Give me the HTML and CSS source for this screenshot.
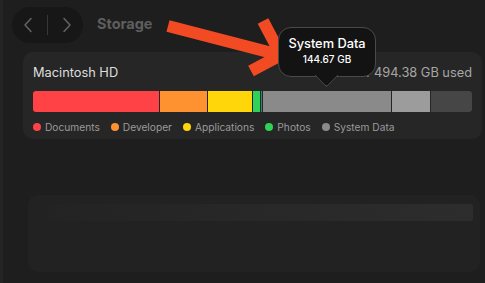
FILE: index.html
```html
<!DOCTYPE html>
<html>
<head>
  <title>Storage</title>
  <link rel="stylesheet" href="styles.css">
</head>
<body>

  <div class="window">
    <div class="toolbar">
      <div class="nav">
        <svg class="chev" width="12" height="16" viewBox="0 0 12 16"><path d="M9 1.5 L3 8 L9 14.5" fill="none" stroke="#636363" stroke-width="1.5" stroke-linecap="round" stroke-linejoin="round"/></svg>
        <div class="nav-sep"></div>
        <svg class="chev" width="12" height="16" viewBox="0 0 12 16"><path d="M3 1.5 L9 8 L3 14.5" fill="none" stroke="#636363" stroke-width="1.5" stroke-linecap="round" stroke-linejoin="round"/></svg>
      </div>
      <div class="title">Storage</div>
    </div>

    <div class="card">
      <div class="card-head">
        <span class="disk">Macintosh HD</span>
        <span class="used">350.1 GB of 494.38 GB used</span>
      </div>
      <div class="bar">
        <div class="seg red" style="width:126px"></div>
        <div class="seg orange" style="width:47px"></div>
        <div class="seg yellow" style="width:44px"></div>
        <div class="seg green" style="width:7px"></div>
        <div class="seg teal" style="width:1px"></div>
        <div class="seg gray" style="width:128px"></div>
        <div class="seg light" style="width:38px"></div>
        <div class="seg dark"></div>
      </div>
      <div class="legend">
        <span class="item"><i class="dot red"></i>Documents</span>
        <span class="item"><i class="dot orange"></i>Developer</span>
        <span class="item"><i class="dot yellow"></i>Applications</span>
        <span class="item"><i class="dot green"></i>Photos</span>
        <span class="item"><i class="dot gray"></i>System Data</span>
      </div>
    </div>

    <div class="card faint">
      <div class="faint-row"></div>
    </div>
  </div>

  <svg class="arrow" width="485" height="100" viewBox="0 0 485 100">
    <path d="M168 26 L280 55 M263 21 L281 55 L251 71" fill="none" stroke="#f24b24" stroke-width="12" stroke-linejoin="miter"/>
  </svg>

  <div class="tooltip">
    <div class="tip-name">System Data</div>
    <div class="tip-size">144.67 GB</div>
  </div>

</body>
</html>
```

FILE: styles.css
```css
body {
  margin: 0;
  width: 485px;
  height: 283px;
  overflow: hidden;
  background: #1e1e1e;
  font-family: Inter, "Liberation Sans", sans-serif;
  position: relative;
}

.window {
  border-left: 3px solid #242424;
  height: 283px;
  box-sizing: border-box;
}

.toolbar {
  display: flex;
  align-items: center;
  padding: 7px 0 0 9px;
}

.nav {
  width: 71px;
  height: 36px;
  border-radius: 18px;
  background: #171717;
  display: flex;
  align-items: center;
  justify-content: space-between;
  padding: 0 10px;
  box-sizing: border-box;
}

.nav-sep {
  width: 1px;
  height: 20px;
  background: #383838;
}

.title {
  margin-left: 14px;
  font-size: 14.5px;
  font-weight: 700;
  color: #5e5e5e;
  margin-top: -3px;
}

.card {
  margin: 9px 0 0 20px;
  width: 459px;
  height: 87px;
  background: #262626;
  border-radius: 10px;
  padding: 13px 10px 0 10px;
  box-sizing: border-box;
}

.card-head {
  display: flex;
  justify-content: space-between;
  align-items: baseline;
  height: 20px;
}

.disk {
  font-size: 12.8px;
  color: #dedede;
}

.used {
  font-size: 12.8px;
  color: #a6a6a6;
}

.bar {
  display: flex;
  gap: 1px;
  height: 21px;
  margin-top: 6px;
  border-radius: 3px;
  overflow: hidden;
}

.seg {
  height: 100%;
}

.seg.dark {
  flex: 1;
}

.red { background: #ff4245; }
.orange { background: #ff9230; }
.yellow { background: #ffd60a; }
.green { background: #30d158; }
.teal { background: #1f8f6a; }
.gray { background: #8a8a8a; }
.light { background: #9c9c9c; }
.dark { background: #464646; }

.legend {
  display: flex;
  gap: 11px;
  margin-top: 9px;
  font-size: 10.2px;
  color: #9a9a9a;
}

.item {
  display: flex;
  align-items: center;
  gap: 4px;
}

.dot {
  width: 8px;
  height: 8px;
  border-radius: 50%;
}

.faint {
  margin: 56px 0 0 25px;
  width: 452px;
  height: 77px;
  background: #222222;
  padding: 9px 7px 0 20px;
}

.faint-row {
  height: 17px;
  background: linear-gradient(to right, #232323, #272727 40%, #2d2d2d);
  border-radius: 2px;
}

.arrow {
  position: absolute;
  left: 0;
  top: 0;
}

.tooltip {
  position: absolute;
  left: 278px;
  top: 27px;
  width: 98px;
  height: 50px;
  box-sizing: border-box;
  background: #131313;
  border: 1px solid #4a4a4a;
  border-radius: 13px;
  text-align: center;
  color: #fff;
  padding-top: 8px;
}

.tooltip::after {
  content: "";
  position: absolute;
  left: 39px;
  top: 39px;
  width: 16px;
  height: 16px;
  background: #131313;
  border-right: 1px solid #4a4a4a;
  border-bottom: 1px solid #4a4a4a;
  transform: rotate(45deg);
  border-bottom-right-radius: 3px;
}

.tip-name {
  font-size: 12.8px;
  font-weight: 500;
  position: relative;
  z-index: 1;
}

.tip-size {
  font-size: 10px;
  font-weight: 500;
  margin-top: 2px;
  position: relative;
  z-index: 1;
}
```
